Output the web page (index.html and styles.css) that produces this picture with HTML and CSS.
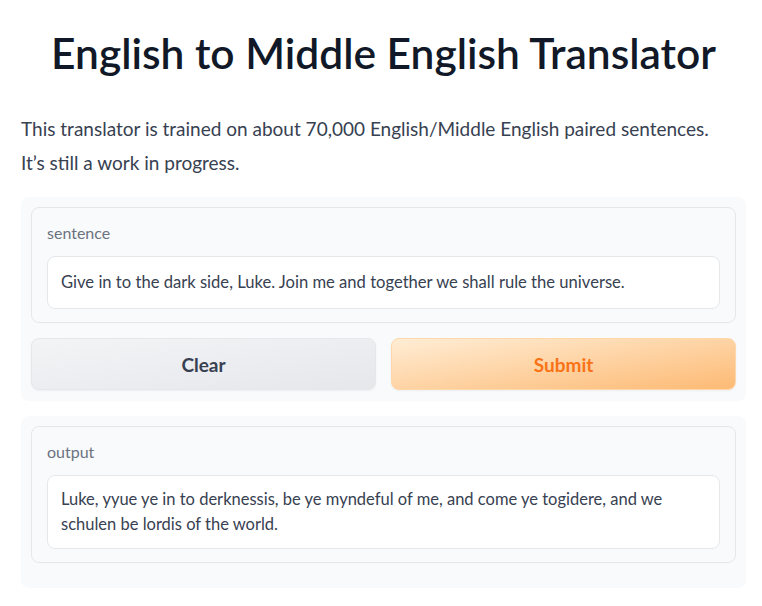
FILE: index.html
```html
<!DOCTYPE html>
<html>
<head>
<meta charset="utf-8">
<link rel="stylesheet" href="styles.css">
</head>
<body>
<div class="app">
  <h1 class="title">English to Middle English Translator</h1>
  <div class="desc">
    <p>This translator is trained on about 70,000 English/Middle English paired sentences.</p>
    <p>It’s still a work in progress.</p>
  </div>
  <div class="panel panel-input">
    <div class="block">
      <div class="label">sentence</div>
      <div class="field field-input">Give in to the dark side, Luke. Join me and together we shall rule the universe.</div>
    </div>
    <div class="buttons">
      <button class="btn btn-clear">Clear</button>
      <button class="btn btn-submit">Submit</button>
    </div>
  </div>
  <div class="panel panel-output">
    <div class="block">
      <div class="label">output</div>
      <div class="field field-output">Luke, yyue ye in to derknessis, be ye myndeful of me, and come ye togidere, and we schulen be lordis of the world.</div>
    </div>
  </div>
</div>
</body>
</html>
```
FILE: styles.css
```css
* { box-sizing: border-box; }
body {
  margin: 0;
  background: #ffffff;
  font-family: "Lato", "Noto Sans", sans-serif;
  color: #374151;
}
.app {
  width: 725px;
  margin-left: 21px;
  padding-top: 25px;
}
.title {
  margin: 0;
  text-align: center;
  font-size: 42.5px;
  font-weight: 600;
  line-height: 56px;
  color: #111827;
}
.desc {
  margin-top: 31px;
  font-size: 19px;
  color: #374151;
}
.desc p {
  margin: 0;
  line-height: 34px;
}
.panel {
  background: #f9fafb;
  border-radius: 8px;
  padding: 10px;
}
.panel-input { margin-top: 17px; padding-bottom: 11px; }
.panel-output { margin-top: 15px; padding-bottom: 25px; }
.block {
  border: 1px solid #e5e7eb;
  border-radius: 8px;
  padding: 15px 15px 13px 15px;
}
.label {
  font-size: 16px;
  color: #6b7280;
  line-height: 20px;
  margin-bottom: 13px;
}
.field {
  background: #ffffff;
  border: 1px solid #e5e7eb;
  border-radius: 8px;
  padding: 13px 13px;
  font-size: 16.6px;
  line-height: 25px;
  color: #374151;
}
.field-output {
  padding: 11px 13px;
  font-size: 16.5px;
}
.buttons {
  display: flex;
  gap: 15px;
  margin-top: 15px;
}
.btn {
  flex: 1;
  height: 52px;
  border-radius: 8px;
  font-family: inherit;
  font-size: 19px;
  font-weight: 700;
  border: 1px solid #e5e7eb;
  box-shadow: 0 1px 2px rgba(0,0,0,0.05);
}
.btn-clear {
  background: linear-gradient(to bottom right, #f3f4f6, #e5e7eb);
  color: #374151;
}
.btn-submit {
  background: linear-gradient(to bottom right, #ffedd5, #fdba74);
  border-color: #fed7aa;
  color: #f97316;
}
```
